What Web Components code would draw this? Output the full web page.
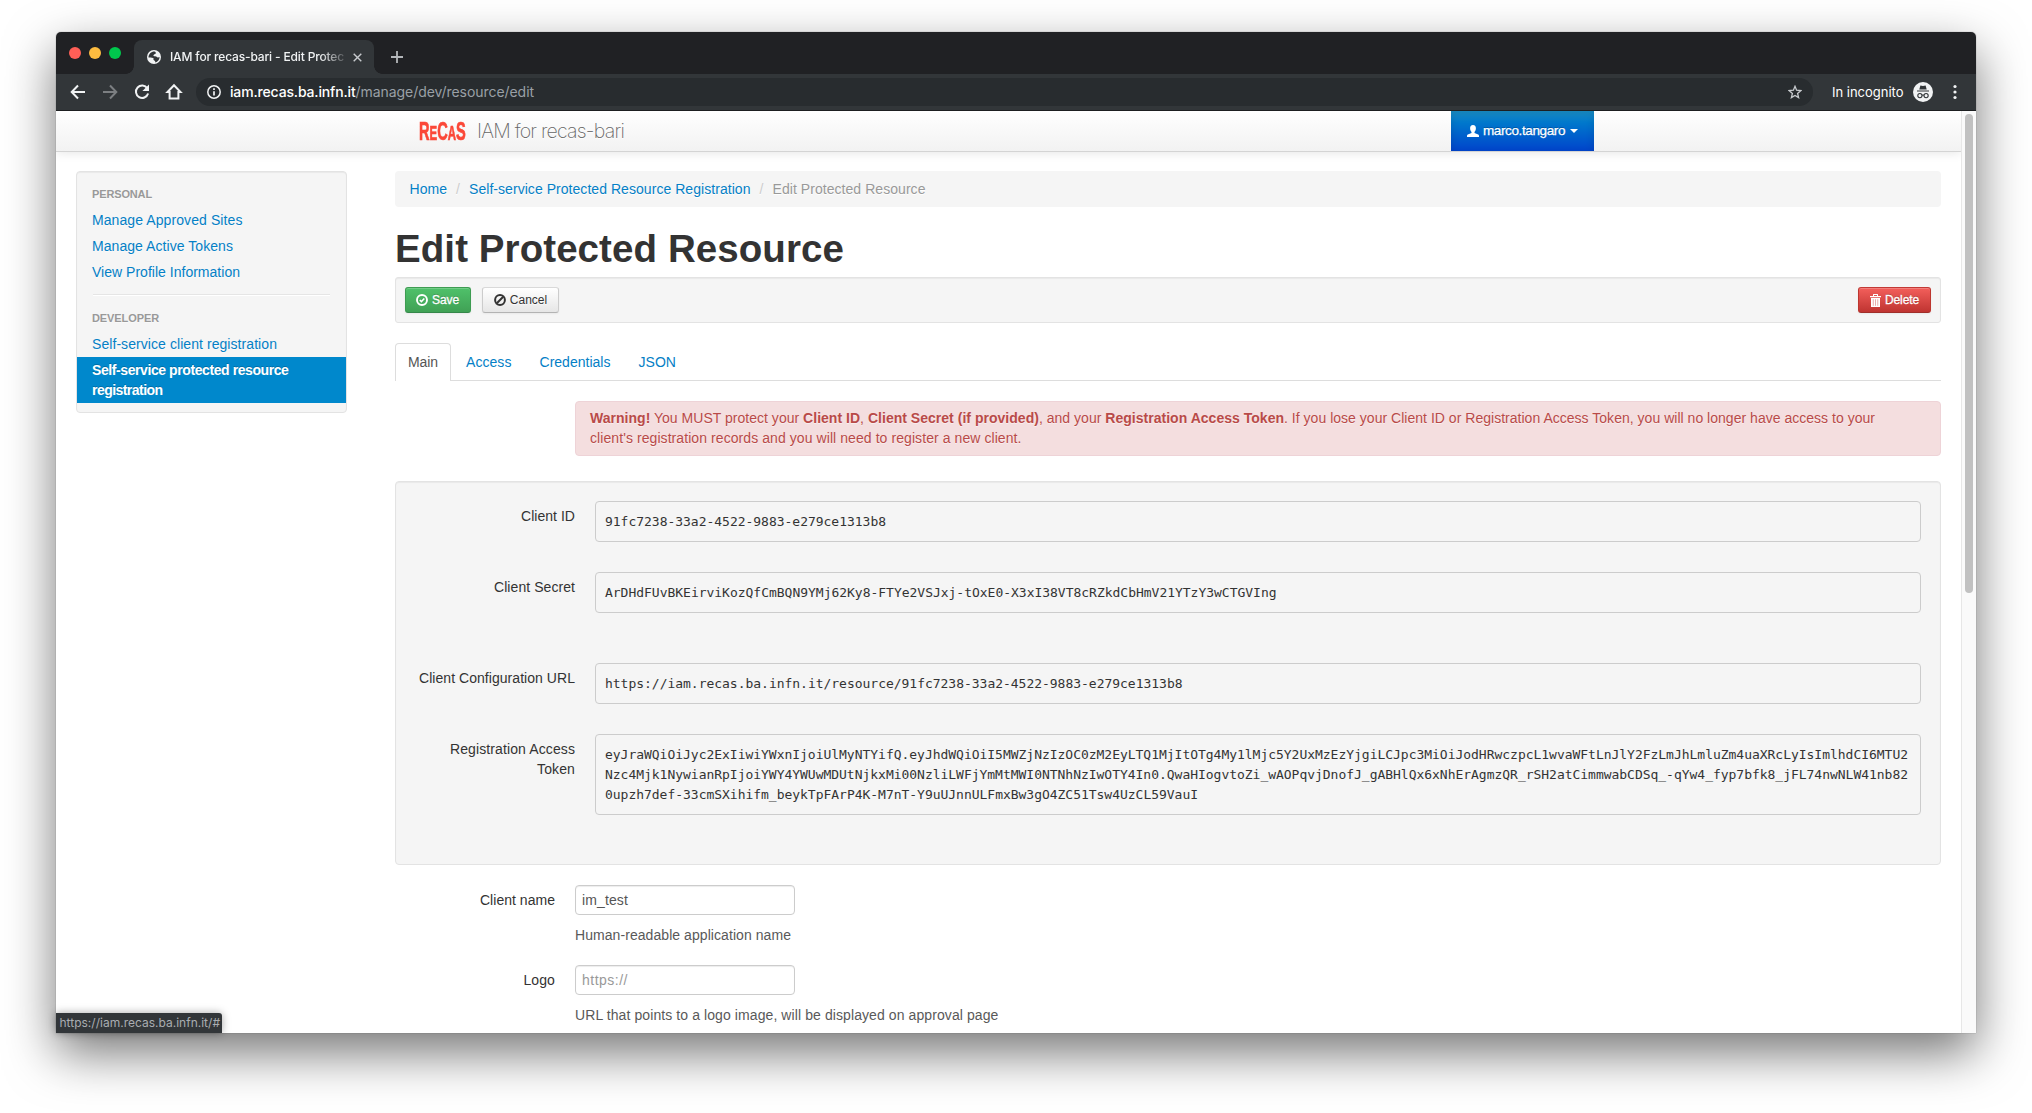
<!DOCTYPE html>
<html lang="en">
<head>
<meta charset="utf-8">
<title>IAM for recas-bari - Edit Protected Resource</title>
<style>
html,body{margin:0;padding:0;height:100%;background:#fff;overflow:hidden}
body{font:14px/20px "Liberation Sans",Arial,sans-serif;color:#333}
</style>
</head>
<body>
<browser-window></browser-window>
<script>
const define=(name,html,extra)=>{
  const t=document.createElement('template');
  t.innerHTML='<style>*{box-sizing:border-box}</style>'+html;
  customElements.define(name,class extends HTMLElement{
    constructor(){super();this.attachShadow({mode:'open'}).appendChild(t.content.cloneNode(true));}
    connectedCallback(){if(extra)extra(this,this.shadowRoot);}
  });
};

/* Text run set to an exact width by tracking */
const fit=el=>{
  const w=parseFloat(el.getAttribute('w'));
  if(!w)return;
  el.style.letterSpacing='0px';
  const natural=el.getBoundingClientRect().width;
  el.style.letterSpacing=((w-natural)/el.textContent.length).toFixed(4)+'px';
};
define('fit-text','<style>:host{display:inline-block;white-space:nowrap}</style><slot></slot>');

define('side-header','<style>:host{display:block;padding:3px 15px;font-size:11px;font-weight:bold;color:#999;text-shadow:0 1px 0 rgba(255,255,255,.5)}</style><slot></slot>');
define('side-link','<style>:host{display:block;padding:3px 15px;color:#0480c6;text-shadow:0 1px 0 rgba(255,255,255,.5)}:host([active]){background:#08c;color:#fff;font-weight:bold;text-shadow:0 -1px 0 rgba(0,0,0,.2)}</style><slot></slot>');
define('side-nav',`<style>
:host{display:block;width:271px;height:242px;padding:9px 0;background:#f5f5f5;border:1px solid #e3e3e3;border-radius:4px;box-shadow:inset 0 1px 1px rgba(0,0,0,.05);flex:none}
hr{height:2px;margin:9px 16px;border:0;background:#e5e5e5;border-bottom:1px solid #fff}
</style>
<side-header><fit-text w="60">PERSONAL</fit-text></side-header>
<side-link><fit-text w="150.5">Manage Approved Sites</fit-text></side-link>
<side-link><fit-text w="141">Manage Active Tokens</fit-text></side-link>
<side-link><fit-text w="148">View Profile Information</fit-text></side-link>
<hr>
<side-header><fit-text w="67">DEVELOPER</fit-text></side-header>
<side-link><fit-text w="185">Self-service client registration</fit-text></side-link>
<side-link active><fit-text w="196.5">Self-service protected resource</fit-text><br><fit-text w="70.5">registration</fit-text></side-link>`);

define('crumb-bar',`<style>
:host{display:flex;height:36px;padding:8px 14.5px;background:#f5f5f5;border-radius:4px;color:#0480c6;text-shadow:0 1px 0 #fff}
i{font-style:normal;color:#ccc;width:22px;text-align:center}
.cur{color:#999}
</style><fit-text w="37.5">Home</fit-text><i>/</i><fit-text w="281.5">Self-service Protected Resource Registration</fit-text><i>/</i><fit-text class="cur" w="153">Edit Protected Resource</fit-text>`);

define('action-button',`<style>
:host{display:flex;align-items:center;justify-content:center;height:26px;padding-right:1px;gap:4px;border-radius:3px;font-size:12px;line-height:20px;color:#333;border:1px solid #ccc;border-color:#d9d9d9 #ccc #b3b3b3;background:linear-gradient(#fff,#e6e6e6);box-shadow:inset 0 1px 0 rgba(255,255,255,.2),0 1px 2px rgba(0,0,0,.05);text-shadow:0 1px 1px rgba(255,255,255,.75)}
:host([kind=success]),:host([kind=danger]){color:#fff;text-shadow:0 -1px 0 rgba(0,0,0,.25);-webkit-text-stroke:.3px #fff}
:host([kind=success]){border-color:#3e9c52 #3e9c52 #35874a;background:linear-gradient(#4fc16a,#40a155)}
:host([kind=danger]){border-color:#c23a36 #bd362f #a02f2a;background:linear-gradient(#f35f5b,#bf3431)}
</style><slot></slot>`);
define('action-bar',`<style>
:host{display:flex;height:46px;padding:9px;gap:11px;background:#f5f5f5;border:1px solid #e3e3e3;border-radius:3px;box-shadow:inset 0 1px 1px rgba(0,0,0,.05)}
svg{display:block;flex:none}
.save{width:66px}.cancel{width:77px;padding-right:0}.del{width:73px;margin-left:auto;padding-right:0}
</style>
<action-button class="save" kind="success"><svg width="12" height="12" viewBox="0 0 12 12" fill="none" stroke="#fff" stroke-width="1.9"><circle cx="6" cy="6" r="5"/><path d="M3.8 6 5.4 7.6 8.3 4.4" stroke-width="1.5"/></svg><fit-text w="27">Save</fit-text></action-button>
<action-button class="cancel"><svg width="12" height="12" viewBox="0 0 12 12" fill="none" stroke="#333" stroke-width="2"><circle cx="6" cy="6" r="4.9"/><path d="M9.2 2.8 2.8 9.2"/></svg><fit-text w="37.5">Cancel</fit-text></action-button>
<action-button class="del" kind="danger"><svg width="11" height="13" viewBox="0 0 11 13" fill="#fff"><path d="M3 2V.5Q3 0 3.5 0h4Q8 0 8 .5V2h3v1.2H0V2zM4 2h3V1H4zM1 4h9v9H1z"/><path d="M3.25 5.2v6.600M5.5 5.2v6.600M7.75 5.2v6.600" stroke="#e08a87" stroke-width=".7"/></svg><fit-text w="34">Delete</fit-text></action-button>`);

define('tab-item','<style>:host{display:block;height:38px;padding:9px 13px;margin-right:2px;color:#0480c6}:host([active]){color:#555;background:#fff;border:1px solid #ddd;border-bottom:0;border-radius:4px 4px 0 0;padding:8px 12px}</style><slot></slot>');
define('tab-bar',`<style>:host{display:flex;height:38px;background:linear-gradient(#ddd,#ddd) 0 100%/100% 1px no-repeat}</style>
<tab-item active><fit-text w="30">Main</fit-text></tab-item><tab-item><fit-text w="45.500">Access</fit-text></tab-item><tab-item><fit-text w="71">Credentials</fit-text></tab-item><tab-item><fit-text w="37.5">JSON</fit-text></tab-item>`);

define('warning-alert',`<style>
:host{display:block;height:55px;margin-left:180px;padding:6px 14px;background:#f4dedf;border:1px solid #eed3d7;border-radius:4px;color:#b94a48;text-shadow:0 1px 0 rgba(255,255,255,.5)}
</style><fit-text w="1285"><b>Warning!</b> You MUST protect your <b>Client ID</b>, <b>Client Secret (if provided)</b>, and your <b>Registration Access Token</b>. If you lose your Client ID or Registration Access Token, you will no longer have access to your</fit-text><br><fit-text w="431.5">client's registration records and you will need to register a new client.</fit-text>`);

define('value-row',`<style>
:host{display:flex;gap:20px;margin-bottom:30px}
.label{width:160px;padding-top:5px;text-align:right;flex:none}
.box{flex:1;padding:9.5px 9px;background:#f5f5f5;border:1px solid #ccc;border-radius:4px;font:13px/20px "DejaVu Sans Mono","Liberation Mono",monospace;color:#333;white-space:nowrap}
</style><div class="label"><slot name="label"></slot></div><div class="box"><slot></slot></div>`);
define('client-panel',`<style>
:host{display:block;height:384px;padding:19px 19px 0;background:#f5f5f5;border:1px solid #e3e3e3;border-radius:4px;box-shadow:inset 0 1px 1px rgba(0,0,0,.05)}
value-row{height:41px}.gap{margin-bottom:50px}.tall{height:81px}
</style>
<value-row><span slot="label"><fit-text w="54">Client ID</fit-text></span><fit-text w="281">91fc7238-33a2-4522-9883-e279ce1313b8</fit-text></value-row>
<value-row class="gap"><span slot="label"><fit-text w="81">Client Secret</fit-text></span><fit-text w="671.5">ArDHdFUvBKEirviKozQfCmBQN9YMj62Ky8-FTYe2VSJxj-tOxE0-X3xI38VT8cRZkdCbHmV21YTzY3wCTGVIng</fit-text></value-row>
<value-row><span slot="label"><fit-text w="156">Client Configuration URL</fit-text></span><fit-text w="577.5">https://iam.recas.ba.infn.it/resource/91fc7238-33a2-4522-9883-e279ce1313b8</fit-text></value-row>
<value-row class="tall"><span slot="label"><fit-text w="125">Registration Access</fit-text><br><fit-text w="38">Token</fit-text></span><fit-text w="1303">eyJraWQiOiJyc2ExIiwiYWxnIjoiUlMyNTYifQ.eyJhdWQiOiI5MWZjNzIzOC0zM2EyLTQ1MjItOTg4My1lMjc5Y2UxMzEzYjgiLCJpc3MiOiJodHRwczpcL1wvaWFtLnJlY2FzLmJhLmluZm4uaXRcLyIsImlhdCI6MTU2</fit-text><br><fit-text w="1303">Nzc4Mjk1NywianRpIjoiYWY4YWUwMDUtNjkxMi00NzliLWFjYmMtMWI0NTNhNzIwOTY4In0.QwaHIogvtoZi_wAOPqvjDnofJ_gABHlQx6xNhErAgmzQR_rSH2atCimmwabCDSq_-qYw4_fyp7bfk8_jFL74nwNLW41nb82</fit-text><br><fit-text w="593">0upzh7def-33cmSXihifm_beykTpFArP4K-M7nT-Y9uUJnnULFmxBw3gO4ZC51Tsw4UzCL59VauI</fit-text></value-row>`);

define('form-field',`<style>
:host{display:flex;gap:20px;height:60px;margin-bottom:20px}
.label{width:160px;padding-top:5px;text-align:right;flex:none}
.input{width:220px;height:30px;padding:4px 6px;border:1px solid #ccc;border-radius:4px;background:#fff;box-shadow:inset 0 1px 1px rgba(0,0,0,.075);color:#555}
.input.ph{color:#999}
.help{margin-top:10px;color:#595959;white-space:nowrap}
</style><div class="label"><slot name="label"></slot></div><div><div class="input"><slot></slot></div><div class="help"><slot name="help"></slot></div></div>`,
(el,r)=>{if(el.hasAttribute('placeholder'))r.querySelector('.input').classList.add('ph');});

define('user-menu',`<style>
:host{display:flex;align-items:center;width:143px;height:40px;padding-left:16px;color:#fff;font-size:13.5px;background:linear-gradient(#1a92cc,#0077cc 30%,#0044cc);text-shadow:0 -1px 0 rgba(0,0,0,.25);box-shadow:inset 0 3px 8px rgba(0,0,0,.125);-webkit-text-stroke:.25px #fff}
fit-text{margin:0 5px 0 4px}
</style><svg width="12" height="12" viewBox="0 0 12 12" fill="#fff"><path d="M6 0C3.9 0 3.1 1.4 3.1 3.2c0 1.7.7 2.9 1.4 3.7v1.2L.8 9.6C.2 9.9 0 10.3 0 11v1h12v-1c0-.7-.2-1.1-.8-1.4L7.5 8.1V6.9c.7-.8 1.4-2 1.4-3.7C8.900 1.4 8.100 0 6 0z"/></svg><fit-text w="82">marco.tangaro</fit-text><svg width="8" height="4" viewBox="0 0 8 4" fill="#fff"><path d="M0 0h8L4 4z"/></svg>`);
define('recas-logo',`<style>
:host{display:block;width:47px;height:28px;flex:none}
div{display:flex;align-items:baseline;width:max-content;transform-origin:0 0;transform:scaleX(.66);color:#fb4838;font:bold 25.500px/28px "Liberation Sans Narrow","Liberation Sans",sans-serif;-webkit-text-stroke:.7px #fb4838}
small{font-size:20px}
</style><div><span>R</span><small>E</small><span>C</span><small>A</small><span>S</span></div>`,
(el,r)=>{const d=r.querySelector('div');d.style.transform='scaleX('+(47/d.offsetWidth)+')';});
define('site-navbar',`<style>
:host{display:flex;height:41px;padding-left:363px;background:linear-gradient(#fff,#f2f2f2);border-bottom:1px solid #d4d4d4;box-shadow:0 1px 10px rgba(0,0,0,.1);position:relative;flex:none}
recas-logo{margin-top:6px}
.name{margin:10px 0 0 11px;font:200 19.5px/20px Inter,sans-serif;color:#666;text-shadow:0 1px 0 #fff;width:147px}
user-menu{margin-left:827px}
</style><recas-logo></recas-logo><span class="name"><fit-text w="147">IAM for recas-bari</fit-text></span><user-menu></user-menu>`);

define('scroll-bar','<style>:host{display:block;width:15px;flex:none;background:#fafafa;border-left:1px solid #e7e7e7;padding:3px 0 0 3px}div{width:8px;height:479px;border-radius:4px;background:#c1c1c1}</style><div></div>');

define('resource-page',`<style>
:host{display:flex;flex:1;min-height:0;background:#fff;overflow:hidden;font:14px/20px "Liberation Sans",Arial,sans-serif;color:#333}
.view{flex:1;display:flex;flex-direction:column;overflow:hidden}
.body{display:flex;gap:48px;padding:19px 20px 0;min-height:0}
main{width:1546px;flex:none}
h1{margin:22px 0 8px;font-size:38.5px;line-height:40px;font-weight:bold;height:40px}
action-bar{margin-bottom:20px}
tab-bar{margin-bottom:20px}
warning-alert{margin-bottom:25px}
client-panel{margin-bottom:20px}
form-field:last-child{margin-bottom:0}
</style>
<div class="view"><site-navbar></site-navbar><div class="body"><side-nav></side-nav><main>
<crumb-bar></crumb-bar><h1><fit-text w="449">Edit Protected Resource</fit-text></h1><action-bar></action-bar><tab-bar></tab-bar><warning-alert></warning-alert><client-panel></client-panel>
<form-field><span slot="label"><fit-text w="75">Client name</fit-text></span><fit-text w="46">im_test</fit-text><span slot="help"><fit-text w="216">Human-readable application name</fit-text></span></form-field>
<form-field placeholder><span slot="label"><fit-text w="31.5">Logo</fit-text></span><fit-text w="46">https://</fit-text><span slot="help"><fit-text w="423.500">URL that points to a logo image, will be displayed on approval page</fit-text></span></form-field>
</main></div></div><scroll-bar></scroll-bar>`);

define('tab-strip',`<style>
:host{display:flex;height:42px;background:#202124;padding:8px 0 0 13px;flex:none;border-radius:5px 5px 0 0}
.lights{display:flex;gap:8px;padding:7px 12px 0 0;width:65px;height:34px}
.lights i{width:12px;height:12px;border-radius:50%}
.tab{width:240px;height:34px;background:#323639;border-radius:8px 8px 0 0;display:flex;align-items:center;padding-left:13px;position:relative}
.tab:before,.tab:after{content:"";position:absolute;bottom:0;width:8px;height:8px}
.tab:before{left:-8px;background:radial-gradient(circle at 0 0,transparent 7.500px,#323639 8px)}
.tab:after{right:-8px;background:radial-gradient(circle at 100% 0,transparent 7.500px,#323639 8px)}
.t{width:176px;margin:0 7px 0 9px;overflow:hidden;white-space:nowrap;font:500 12px/16px Inter,sans-serif;color:#f1f3f4;-webkit-mask:linear-gradient(90deg,#000 150px,transparent 180px)}
.plus{margin:11px 0 0 16.500px}
svg{flex:none;display:block}
</style><div class="lights"><i style="background:#ff5f57"></i><i style="background:#fdbc40"></i><i style="background:#00c84d"></i></div>
<div class="tab"><svg width="14" height="14" viewBox="0 0 14 14"><circle cx="7" cy="7" r="7" fill="#f1f3f4"/><path d="M7.600 1.500C9 2 9.200 3.400 8.200 3.900 7 4.400 6.400 4.800 6.400 5.600c0 .9 1.400.6 2.700.8.8.1 1 .9 1.500 1 .7.200 1.500-.1 2-.4-.1 2.700-1.800 4.900-4.300 5.400.1-1.200-.2-1.500-1.100-1.900-.9-.3-.9-1.200-.6-2.200C6.200 7.700 3.600 7.300 1.500 7.400 1.400 4.200 4.200 1.400 7.600 1.500z" fill="#323639"/></svg><div class="t"><fit-text w="174">IAM for recas-bari - Edit Protec</fit-text></div><svg width="9" height="9" viewBox="0 0 9 9" stroke="#c8cbce" stroke-width="1.4"><path d="m.7.700 7.600 7.600M8.300.700.700 8.300"/></svg></div>
<svg class="plus" width="12" height="12" viewBox="0 0 12 12" stroke="#b4b7ba" stroke-width="1.800"><path d="M6 0v12M0 6h12"/></svg>`);

define('tool-bar',`<style>
:host{display:flex;align-items:center;height:37px;padding-left:12px;background:#323639;border-bottom:1.500px solid #1d1f21;flex:none;font:14px/20px Inter,sans-serif;color:#fff}
svg{display:block;flex:none}
.nav{display:flex;gap:12px;width:128px}
.omni{width:1617px;height:28px;margin-right:19px;border-radius:14px;background:#282c2f;display:flex;align-items:center;padding:0 11px 0 11px}
.omni svg:last-child{margin-left:auto}
.host{font-weight:500;margin-left:9px}.path{color:#9aa0a6}
.inc{font-size:13px}
.badge{margin:0 20px 0 9px}
</style>
<div class="nav">
<svg width="20" height="20" viewBox="0 0 20 20" fill="none" stroke="#f1f3f4" stroke-width="2"><path d="M17 10H4M10 3.500 3.700 10l6.300 6.500"/></svg>
<svg width="20" height="20" viewBox="0 0 20 20" fill="none" stroke="#7c7f82" stroke-width="2"><path d="M3 10h13M10 3.500l6.300 6.500-6.300 6.500"/></svg>
<svg width="20" height="20" viewBox="0 0 20 20" fill="none" stroke="#f1f3f4" stroke-width="2"><path d="M15.300 6.200A6.200 6.200 0 1 0 16.100 11.500"/><path d="M17 2.500v6.600h-6.600z" fill="#f1f3f4" stroke="none"/></svg>
<svg width="20" height="20" viewBox="0 0 20 20" fill="none" stroke="#f1f3f4" stroke-width="2"><path d="M10 3.200 3.500 10H5.600v6.500h8.800V10h2.100z"/></svg>
</div>
<div class="omni"><svg width="14" height="14" viewBox="0 0 14 14" fill="none" stroke="#f1f3f4" stroke-width="1.500"><circle cx="7" cy="7" r="6.200"/><path d="M7 6.200v4.300M7 3.300v1.700" stroke-width="1.700"/></svg><fit-text class="host" w="125.500">iam.recas.ba.infn.it</fit-text><fit-text class="path" w="178.500">/manage/dev/resource/edit</fit-text><svg width="14" height="14" viewBox="0 0 14 14" fill="none" stroke="#c8cbce" stroke-width="1.300"><path d="m7 1.300 1.600 3.900 4.200.4-3.200 2.800 1 4.200L7 10.400l-3.600 2.200 1-4.200L1.200 5.600l4.200-.4z"/></svg></div>
<fit-text class="inc" w="71.500">In incognito</fit-text>
<svg class="badge" width="20" height="20" viewBox="0 0 20 20"><circle cx="10" cy="10" r="10" fill="#f1f3f4"/><path d="M7.400 3.500 10 4.100l2.600-.6L13.700 7.500H6.300zM4 8.400h12v1.200H4z" fill="#323639"/><g fill="none" stroke="#323639" stroke-width="1.100"><circle cx="6.900" cy="13.600" r="2.100"/><circle cx="13.100" cy="13.600" r="2.100"/><path d="M9 13.300q1-.700 2 0"/></g></svg>
<svg width="4" height="16" viewBox="0 0 4 16" fill="#f1f3f4"><circle cx="2" cy="2.500" r="1.600"/><circle cx="2" cy="8" r="1.600"/><circle cx="2" cy="13.500" r="1.600"/></svg>`);

define('status-bubble','<style>:host{display:block;position:absolute;left:0;bottom:0;width:166px;height:20px;padding-left:3.500px;background:#323639;color:#a9adb1;border-radius:0 3px 0 0;font:12px/20px Inter,sans-serif;box-shadow:0 0 8px rgba(0,0,0,.35)}</style><fit-text w="160.500">https://iam.recas.ba.infn.it/#</fit-text>');

define('browser-window',`<style>
:host{display:block;box-sizing:border-box;padding:32px 56px 80px;height:1113px;overflow:hidden}
.win{position:relative;display:flex;flex-direction:column;width:1920px;height:1001px;border-radius:5px 5px 0 0;box-shadow:0 0 1px rgba(0,0,0,.6),0 20px 50px rgba(0,0,0,.54)}
</style><div class="win"><tab-strip></tab-strip><tool-bar></tool-bar><resource-page></resource-page><status-bubble></status-bubble></div>`);

const walk=root=>root.querySelectorAll('*').forEach(el=>{
  if(el.localName==='fit-text')fit(el);
  if(el.shadowRoot)walk(el.shadowRoot);
});
walk(document);
</script>
</body>
</html>
